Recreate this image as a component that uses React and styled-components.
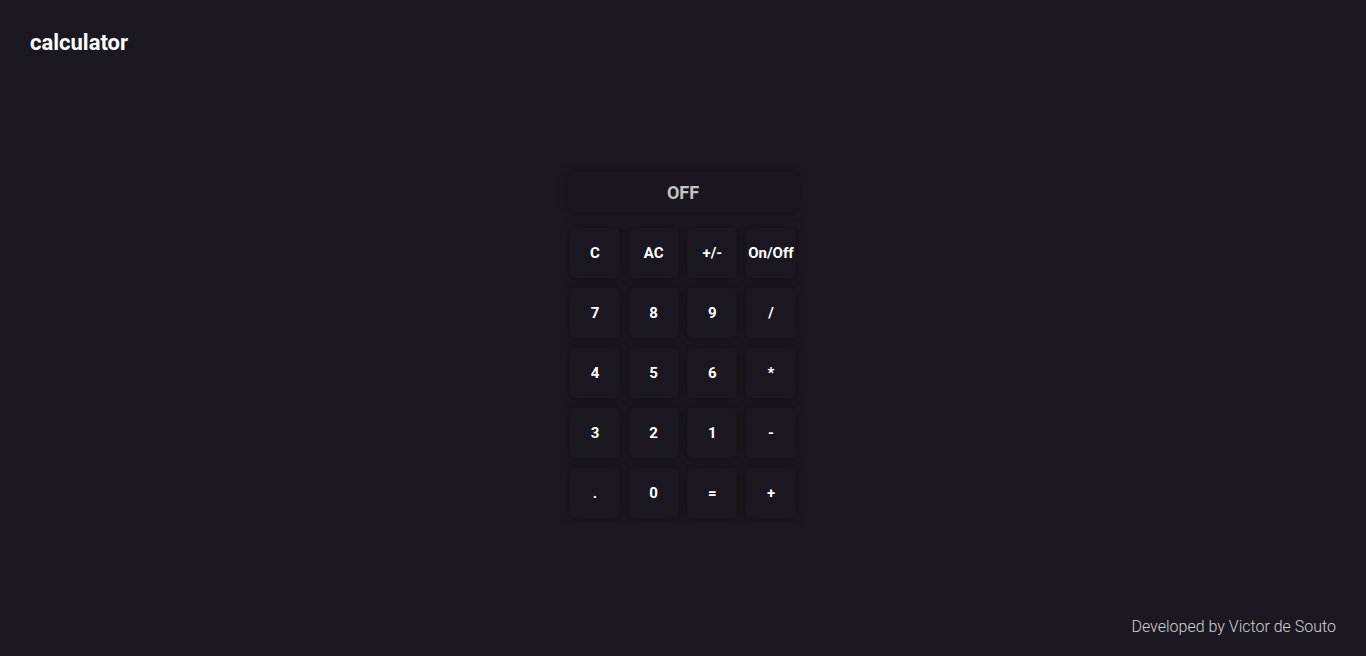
import React, { useState } from "react"
import styled, { createGlobalStyle } from "styled-components"

const GlobalStyle = createGlobalStyle`
  * {
    box-sizing: border-box;
  }

  html,
  body {
    margin: 0;
    padding: 0;
    background: #1b1821;
    font-family: Roboto, "Liberation Sans", sans-serif;
    color: #fff;
  }
`

const Page = styled.div`
  display: flex;
  flex-direction: column;
  height: 656px;
  padding: 30px 30px 20px;
`

const Title = styled.h1`
  margin: 0;
  font-size: 22px;
  font-weight: 700;
  line-height: 26px;
  color: #fff;
`

const Main = styled.main`
  flex: 1;
  display: flex;
  justify-content: center;
  padding-top: 116px;
`

const Calculator = styled.div`
  width: 230px;
  display: flex;
  flex-direction: column;
`

const Display = styled.div`
  height: 40px;
  display: flex;
  align-items: center;
  justify-content: center;
  border-radius: 5px;
  background: #19161f;
  box-shadow: 0 0 10px rgba(0, 0, 0, 0.3);
  font-size: 18px;
  font-weight: 700;
  color: ${(p) => (p.on ? "#fff" : "#c4c4c4")};
  margin-bottom: 16px;
`

const Keys = styled.div`
  display: flex;
  flex-direction: column;
  gap: 10px;
  padding: 0 2px;
`

const Row = styled.div`
  display: flex;
  justify-content: space-between;
`

const Key = styled.button`
  width: 50px;
  height: 50px;
  padding: 0;
  border: none;
  border-radius: 5px;
  background: #1a1720;
  box-shadow: 0 0 10px rgba(0, 0, 0, 0.35);
  font-family: Roboto, "Liberation Sans", sans-serif;
  font-size: 15px;
  font-weight: 700;
  color: #fff;
  cursor: pointer;
`

const Footer = styled.footer`
  text-align: right;
  font-size: 16px;
  font-weight: 300;
  color: #d2d2d2;
`

const rows = [
  ["C", "AC", "+/-", "On/Off"],
  ["7", "8", "9", "/"],
  ["4", "5", "6", "*"],
  ["3", "2", "1", "-"],
  [".", "0", "=", "+"],
]

const App = () => {
  const [on, setOn] = useState(false)

  return (
    <>
      <GlobalStyle />
      <Page>
        <Title>calculator</Title>
        <Main>
          <Calculator>
            <Display on={on}>{on ? "0" : "OFF"}</Display>
            <Keys>
              {rows.map((row, i) => (
                <Row key={i}>
                  {row.map((k) => (
                    <Key
                      key={k}
                      onClick={() => k === "On/Off" && setOn(!on)}
                    >
                      {k}
                    </Key>
                  ))}
                </Row>
              ))}
            </Keys>
          </Calculator>
        </Main>
        <Footer>Developed by Victor de Souto</Footer>
      </Page>
    </>
  )
}

export default App
